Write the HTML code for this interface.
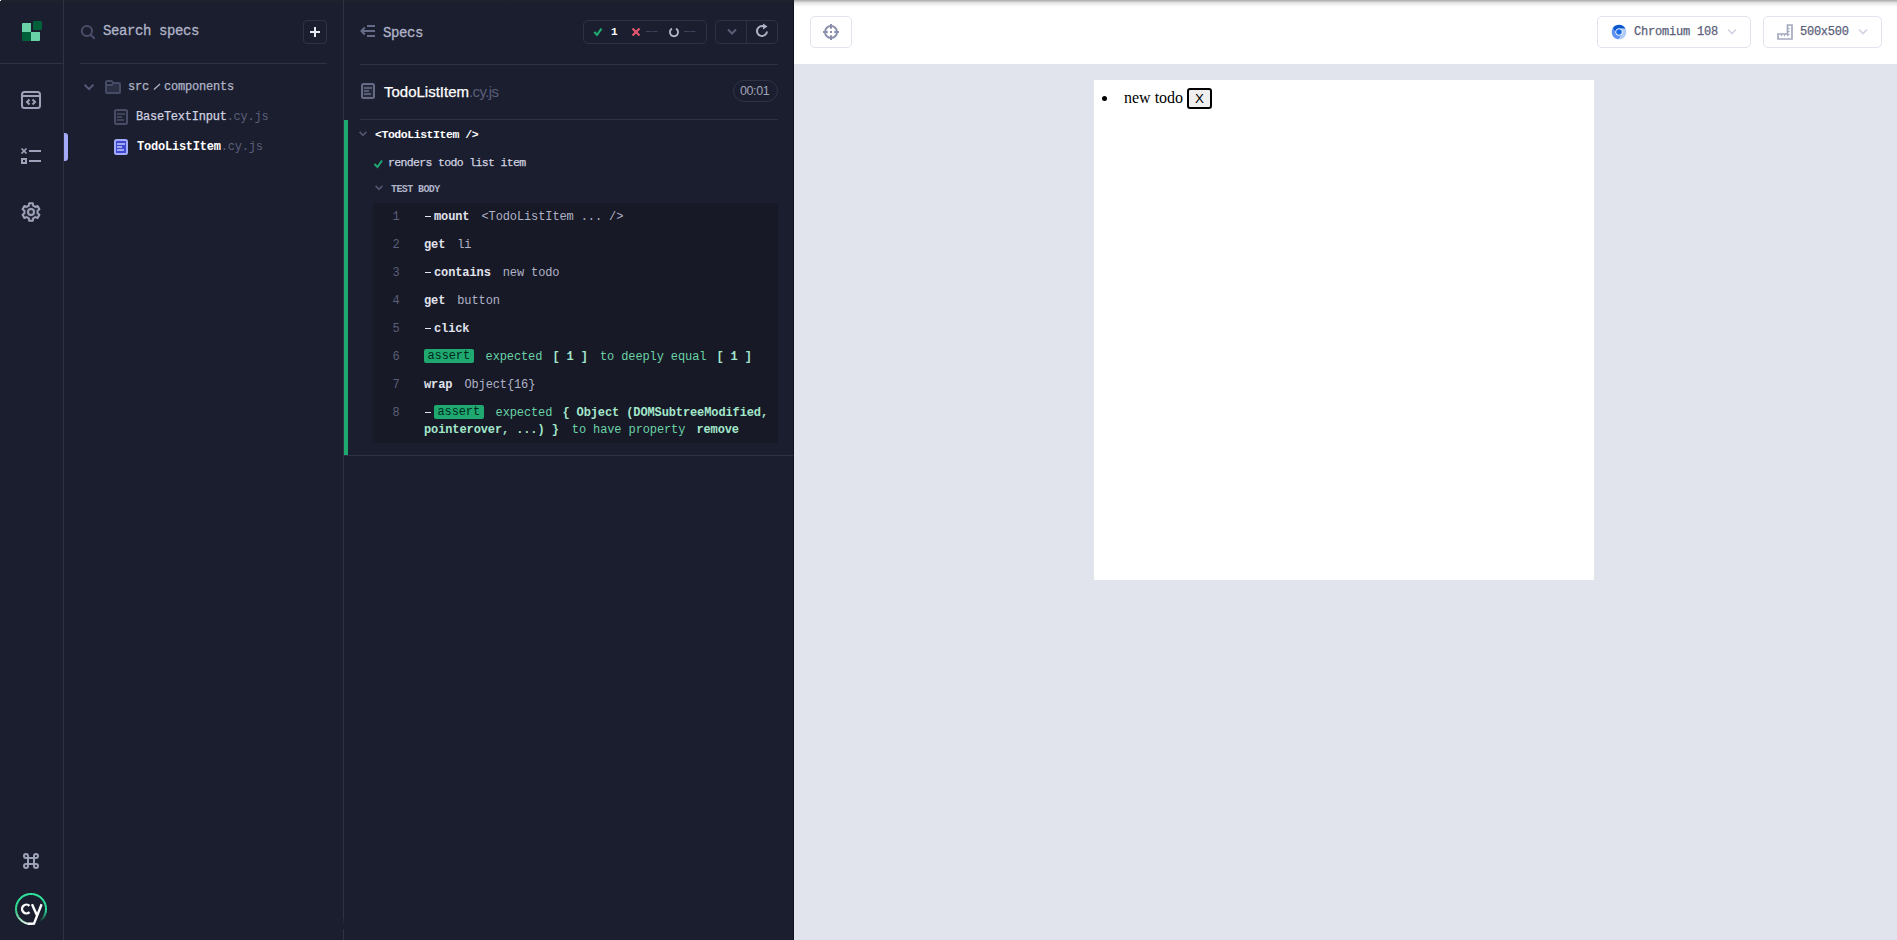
<!DOCTYPE html>
<html><head><meta charset="utf-8">
<style>
*{box-sizing:border-box;margin:0;padding:0}
html,body{width:1897px;height:940px;overflow:hidden;background:#1b1e2e}
body{position:relative;font-family:"Liberation Mono",monospace;color:#afb3c7}
.a{position:absolute}
.t{position:absolute;white-space:pre;line-height:1}
svg{position:absolute;overflow:visible}
.ico{fill:none;stroke:#9ea2b9;stroke-width:2}
</style></head><body>

<!-- ===== Left nav ===== -->
<div class="a" style="left:63px;top:0;width:1px;height:940px;background:#2e3247"></div>
<div class="a" style="left:0;top:63px;width:63px;height:1px;background:#2e3247"></div>

<!-- logo -->
<div class="a" style="left:22px;top:23px;width:9px;height:9px;background:#69d3a7;border-radius:1px 0 0 0"></div>
<div class="a" style="left:32.5px;top:21.3px;width:9px;height:9px;background:#006039;border-radius:1px"></div>
<div class="a" style="left:22px;top:32px;width:9px;height:9px;background:#006039;border-radius:0 0 0 1px"></div>
<div class="a" style="left:31px;top:32px;width:9px;height:9px;background:#69d3a7;border-radius:0 0 1px 0"></div>

<!-- code icon -->
<svg style="left:0;top:0" width="1" height="1"><g class="ico">
<rect x="22" y="92" width="18" height="16" rx="2.5"/>
<line x1="22" y1="96" x2="40" y2="96"/>
<polyline points="29.5,99.5 27,102 29.5,104.5"/>
<polyline points="32.5,99.5 35,102 32.5,104.5"/>
</g></svg>
<!-- list icon -->
<svg style="left:0;top:0" width="1" height="1"><g class="ico">
<line x1="21.5" y1="148.5" x2="26.5" y2="153.5" stroke-width="1.7"/><line x1="26.5" y1="148.5" x2="21.5" y2="153.5" stroke-width="1.7"/>
<rect x="22" y="159" width="4" height="4"/>
<line x1="29" y1="151" x2="41" y2="151"/>
<line x1="29" y1="161" x2="41" y2="161"/>
</g></svg>
<!-- gear -->
<svg style="left:30.7px;top:212px" width="1" height="1"><g class="ico">
<path d="M-2.18 -6.33 L-1.85 -8.71 L1.85 -8.71 L2.18 -6.33 L4.40 -5.06 L6.61 -5.96 L8.46 -2.75 L6.58 -1.28 L6.58 1.28 L8.46 2.75 L6.61 5.96 L4.40 5.06 L2.18 6.33 L1.85 8.71 L-1.85 8.71 L-2.18 6.33 L-4.40 5.06 L-6.61 5.96 L-8.46 2.75 L-6.58 1.28 L-6.58 -1.28 L-8.46 -2.75 L-6.61 -5.96 L-4.40 -5.06Z" stroke-linejoin="round" fill="#262939"/>
<circle cx="0" cy="0" r="3"/>
</g></svg>
<!-- cmd icon -->
<svg style="left:0;top:0" width="1" height="1"><g class="ico">
<path d="M28 858 H34 V864 H28 Z M28 858 V856 A2 2 0 1 0 26 858 H28 M34 858 V856 A2 2 0 1 1 36 858 H34 M28 864 V866 A2 2 0 1 1 26 864 H28 M34 864 V866 A2 2 0 1 0 36 864 H34"/>
</g></svg>
<!-- cypress logo -->
<svg style="left:0;top:0" width="1" height="1">
<defs>
<linearGradient id="cyg" x1="0" y1="0" x2="0" y2="1">
<stop offset="0" stop-color="#2ee59d"/><stop offset="0.6" stop-color="#2bc387"/><stop offset="1" stop-color="#b8f0d8"/>
</linearGradient>
<linearGradient id="cyg2" x1="0" y1="0" x2="1" y2="1">
<stop offset="0" stop-color="#2ee59d"/><stop offset="1" stop-color="#1b1e2e"/>
</linearGradient>
</defs>
<g fill="none" stroke-width="2"><path d="M30.87 894.00 A15 15 0 0 1 32.70 894.10" stroke="rgba(46,229,157,1.00)"/><path d="M32.44 894.07 A15 15 0 0 1 34.25 894.36" stroke="rgba(46,229,157,1.00)"/><path d="M33.99 894.30 A15 15 0 0 1 35.76 894.78" stroke="rgba(46,229,157,1.00)"/><path d="M35.51 894.69 A15 15 0 0 1 37.22 895.35" stroke="rgba(46,229,157,1.00)"/><path d="M36.98 895.24 A15 15 0 0 1 38.61 896.08" stroke="rgba(46,229,157,1.00)"/><path d="M38.39 895.94 A15 15 0 0 1 39.92 896.94" stroke="rgba(46,229,157,1.00)"/><path d="M39.71 896.79 A15 15 0 0 1 41.13 897.94" stroke="rgba(46,229,157,1.00)"/><path d="M40.94 897.77 A15 15 0 0 1 42.23 899.06" stroke="rgba(46,229,157,1.00)"/><path d="M42.06 898.87 A15 15 0 0 1 43.21 900.29" stroke="rgba(46,229,157,1.00)"/><path d="M43.06 900.08 A15 15 0 0 1 44.06 901.61" stroke="rgba(46,229,157,1.00)"/><path d="M43.92 901.39 A15 15 0 0 1 44.76 903.02" stroke="rgba(46,229,157,1.00)"/><path d="M44.65 902.78 A15 15 0 0 1 45.31 904.49" stroke="rgba(46,229,157,1.00)"/><path d="M45.22 904.24 A15 15 0 0 1 45.70 906.01" stroke="rgba(46,229,157,1.00)"/><path d="M45.64 905.75 A15 15 0 0 1 45.93 907.56" stroke="rgba(46,229,157,1.00)"/><path d="M45.90 907.30 A15 15 0 0 1 46.00 909.13" stroke="rgba(46,229,157,1.00)"/><path d="M46.00 908.87 A15 15 0 0 1 45.90 910.70" stroke="rgba(46,229,157,1.00)"/><path d="M45.93 910.44 A15 15 0 0 1 45.64 912.25" stroke="rgba(45,222,152,0.94)"/><path d="M45.70 911.99 A15 15 0 0 1 45.22 913.76" stroke="rgba(44,212,144,0.85)"/><path d="M45.31 913.51 A15 15 0 0 1 44.65 915.22" stroke="rgba(42,202,137,0.76)"/><path d="M44.76 914.98 A15 15 0 0 1 43.92 916.61" stroke="rgba(41,193,129,0.67)"/><path d="M44.06 916.39 A15 15 0 0 1 43.06 917.92" stroke="rgba(40,183,122,0.58)"/><path d="M43.21 917.71 A15 15 0 0 1 42.06 919.13" stroke="rgba(38,164,110,0.46)"/><path d="M42.23 918.94 A15 15 0 0 1 40.94 920.23" stroke="rgba(36,140,96,0.33)"/><path d="M41.13 920.06 A15 15 0 0 1 39.71 921.21" stroke="rgba(33,116,81,0.20)"/><path d="M39.92 921.06 A15 15 0 0 1 38.39 922.06" stroke="rgba(31,92,67,0.07)"/><path d="M34.25 923.64 A15 15 0 0 1 32.44 923.93" stroke="rgba(206,241,223,0.18)"/><path d="M32.70 923.90 A15 15 0 0 1 30.87 924.00" stroke="rgba(218,245,231,0.53)"/><path d="M31.13 924.00 A15 15 0 0 1 29.30 923.90" stroke="rgba(230,248,239,0.88)"/><path d="M29.56 923.93 A15 15 0 0 1 27.75 923.64" stroke="rgba(229,248,238,1.00)"/><path d="M28.01 923.70 A15 15 0 0 1 26.24 923.22" stroke="rgba(220,246,233,1.00)"/><path d="M26.49 923.31 A15 15 0 0 1 24.78 922.65" stroke="rgba(211,244,227,1.00)"/><path d="M25.02 922.76 A15 15 0 0 1 23.39 921.92" stroke="rgba(202,242,222,1.00)"/><path d="M23.61 922.06 A15 15 0 0 1 22.08 921.06" stroke="rgba(193,240,216,1.00)"/><path d="M22.29 921.21 A15 15 0 0 1 20.87 920.06" stroke="rgba(178,237,208,1.00)"/><path d="M21.06 920.23 A15 15 0 0 1 19.77 918.94" stroke="rgba(161,233,198,1.00)"/><path d="M19.94 919.13 A15 15 0 0 1 18.79 917.71" stroke="rgba(143,229,188,1.00)"/><path d="M18.94 917.92 A15 15 0 0 1 17.94 916.39" stroke="rgba(126,225,178,1.00)"/><path d="M18.08 916.61 A15 15 0 0 1 17.24 914.98" stroke="rgba(109,221,168,1.00)"/><path d="M17.35 915.22 A15 15 0 0 1 16.69 913.51" stroke="rgba(91,217,158,1.00)"/><path d="M16.78 913.76 A15 15 0 0 1 16.30 911.99" stroke="rgba(74,213,148,1.00)"/><path d="M16.36 912.25 A15 15 0 0 1 16.07 910.44" stroke="rgba(59,210,140,1.00)"/><path d="M16.10 910.70 A15 15 0 0 1 16.00 908.87" stroke="rgba(57,213,142,1.00)"/><path d="M16.00 909.13 A15 15 0 0 1 16.10 907.30" stroke="rgba(55,216,145,1.00)"/><path d="M16.07 907.56 A15 15 0 0 1 16.36 905.75" stroke="rgba(53,219,148,1.00)"/><path d="M16.30 906.01 A15 15 0 0 1 16.78 904.24" stroke="rgba(51,221,150,1.00)"/><path d="M16.69 904.49 A15 15 0 0 1 17.35 902.78" stroke="rgba(49,224,153,1.00)"/><path d="M17.24 903.02 A15 15 0 0 1 18.08 901.39" stroke="rgba(47,227,155,1.00)"/><path d="M17.94 901.61 A15 15 0 0 1 18.94 900.08" stroke="rgba(46,229,157,1.00)"/><path d="M18.79 900.29 A15 15 0 0 1 19.94 898.87" stroke="rgba(46,229,157,1.00)"/><path d="M19.77 899.06 A15 15 0 0 1 21.06 897.77" stroke="rgba(46,229,157,1.00)"/><path d="M20.87 897.94 A15 15 0 0 1 22.29 896.79" stroke="rgba(46,229,157,1.00)"/><path d="M22.08 896.94 A15 15 0 0 1 23.61 895.94" stroke="rgba(46,229,157,1.00)"/><path d="M23.39 896.08 A15 15 0 0 1 25.02 895.24" stroke="rgba(46,229,157,1.00)"/><path d="M24.78 895.35 A15 15 0 0 1 26.49 894.69" stroke="rgba(46,229,157,1.00)"/><path d="M26.24 894.78 A15 15 0 0 1 28.01 894.30" stroke="rgba(46,229,157,1.00)"/><path d="M27.75 894.36 A15 15 0 0 1 29.56 894.07" stroke="rgba(46,229,157,1.00)"/><path d="M29.30 894.10 A15 15 0 0 1 31.13 894.00" stroke="rgba(46,229,157,1.00)"/></g>
<path d="M29.5 905.8 A4.4 4.4 0 1 0 29.5 912.2" fill="none" stroke="#fff" stroke-width="2.4"/>
<path d="M32 904.2 L36.8 915 M41.6 904.2 L34 923.6 L28 923.8" fill="none" stroke="#fff" stroke-width="2.4"/>
</svg>

<!-- ===== Spec list panel ===== -->
<div class="a" style="left:343px;top:0;width:1px;height:940px;background:#2e3247"></div>
<svg style="left:0;top:0" width="1" height="1"><g fill="none" stroke="#4a4e69" stroke-width="2">
<circle cx="86.9" cy="31" r="5.1"/><line x1="90.6" y1="34.7" x2="94.2" y2="38.3" stroke-linecap="round"/>
</g></svg>
<div class="t" style="left:103px;top:24px;font-size:14px;letter-spacing:-0.4px;color:#afb3c7;-webkit-text-stroke:0.3px #afb3c7">Search specs</div>
<div class="a" style="left:303px;top:20px;width:24px;height:24px;border:1px solid #2e3247;border-radius:4px"></div>
<svg style="left:0;top:0" width="1" height="1"><g fill="none" stroke="#e6e8f2" stroke-width="2">
<line x1="310" y1="32" x2="320" y2="32"/><line x1="315" y1="27" x2="315" y2="37"/>
</g></svg>
<div class="a" style="left:80px;top:63px;width:247px;height:1px;background:#2e3247"></div>

<!-- tree -->
<svg style="left:0;top:0" width="1" height="1"><g fill="none" stroke="#545a77" stroke-width="2">
<polyline points="84.5,84.6 89,89.1 93.5,84.6"/>
</g>
<rect x="107" y="84" width="13" height="9" fill="#2c3044"/>
<path d="M106 92 V82.5 Q106 81 107.5 81 H111.5 L113.5 83 H118.5 Q120 83 120 84.5 V92 Q120 93 119 93 H107 Q106 93 106 92 Z M106 85 H112 L113.5 83" fill="none" stroke="#474b65" stroke-width="2" stroke-linejoin="round"/>
</svg>
<div class="t" style="left:128px;top:81px;font-size:12px;letter-spacing:-0.2px;color:#afb3c7;-webkit-text-stroke:0.25px #afb3c7">src</div><svg style="left:0;top:0" width="1" height="1"><line x1="154" y1="89.5" x2="160" y2="84" stroke="#afb3c7" stroke-width="1.3"/></svg><div class="t" style="left:164px;top:81px;font-size:12px;letter-spacing:-0.2px;color:#afb3c7;-webkit-text-stroke:0.25px #afb3c7">components</div>

<svg style="left:0;top:0" width="1" height="1">
<rect x="115" y="110" width="12" height="14" rx="1.5" fill="#1f2233" stroke="#484c66" stroke-width="2"/>
<g stroke="#484c66" stroke-width="1.6"><line x1="117" y1="114" x2="125" y2="114"/><line x1="117" y1="117" x2="122" y2="117"/><line x1="117" y1="120" x2="124" y2="120"/></g>
<rect x="115" y="140" width="12" height="14" rx="1.5" fill="#3f49d1" stroke="#a3abfa" stroke-width="2"/>
<g stroke="#bcc2fc" stroke-width="1.6"><line x1="117" y1="144" x2="125" y2="144"/><line x1="117" y1="147" x2="122" y2="147"/><line x1="117" y1="150" x2="124" y2="150"/></g>
</svg>
<div class="t" style="left:136px;top:111px;font-size:12px;letter-spacing:-0.23px;color:#d0d2e0;-webkit-text-stroke:0.25px #d0d2e0">BaseTextInput<span style="color:#5a5f7a;-webkit-text-stroke:0">.cy.js</span></div>
<div class="t" style="left:137px;top:141px;font-size:12px;letter-spacing:-0.22px;color:#fff;font-weight:bold">TodoListItem<span style="color:#5a5f7a;font-weight:normal">.cy.js</span></div>
<div class="a" style="left:64px;top:133px;width:4px;height:28px;background:#a3abf9;border-radius:0 3px 3px 0"></div>

<div class="a" style="left:343px;top:918px;width:1px;height:11px;background:linear-gradient(#262a3c,#1e2131 60%,#15172a)"></div>
<!-- ===== Reporter ===== -->
<svg style="left:0;top:0" width="1" height="1"><g fill="none" stroke="#666b88" stroke-width="2">
<line x1="367" y1="26" x2="375" y2="26"/><line x1="362" y1="31" x2="375" y2="31"/><line x1="367" y1="36" x2="375" y2="36"/>
<polyline points="364.8,27.5 361.5,31 364.8,34.5"/>
</g></svg>
<div class="t" style="left:383px;top:26px;font-size:14px;letter-spacing:-0.4px;color:#afb3c7;-webkit-text-stroke:0.3px #afb3c7">Specs</div>

<div class="a" style="left:583px;top:20px;width:124px;height:24px;border:1px solid #2e3247;border-radius:5px"></div>
<svg style="left:0;top:0" width="1" height="1">
<polyline points="594.3,32 597,34.8 601.5,28.6" fill="none" stroke="#1fa971" stroke-width="2.2"/>
<g stroke="#e45770" stroke-width="2.2"><line x1="632.5" y1="28.5" x2="639.5" y2="35.5"/><line x1="639.5" y1="28.5" x2="632.5" y2="35.5"/></g>
<g stroke="#3d4159" stroke-width="1"><line x1="646" y1="31.5" x2="651.4" y2="31.5"/><line x1="652.2" y1="31.5" x2="657.6" y2="31.5"/>
<line x1="684" y1="31.5" x2="689.4" y2="31.5"/><line x1="690.2" y1="31.5" x2="695.6" y2="31.5"/></g>
<path d="M676.05 28.65 A4.1 4.1 0 1 1 671.95 28.65" fill="none" stroke="#afb3c7" stroke-width="1.9"/>
</svg>
<div class="t" style="left:611px;top:27px;font-size:11px;color:#fff;font-weight:bold">1</div>

<div class="a" style="left:715px;top:20px;width:63px;height:24px;border:1px solid #2e3247;border-radius:5px"></div>
<div class="a" style="left:746px;top:20px;width:1px;height:24px;background:#2e3247"></div>
<svg style="left:0;top:0" width="1" height="1">
<polyline points="728,29.5 732,33.5 736,29.5" fill="none" stroke="#5a5f7a" stroke-width="2"/>
<path d="M767 31.5 A5 5 0 1 1 764.2 26.5" fill="none" stroke="#afb3c7" stroke-width="2"/>
<path d="M763 23.5 L767.5 26.5 L763 29.5 Z" fill="#afb3c7"/>
</svg>

<div class="a" style="left:360px;top:64px;width:418px;height:1px;background:#2e3247"></div>

<svg style="left:0;top:0" width="1" height="1">
<rect x="362" y="84" width="12" height="14" rx="1.5" fill="#262939" stroke="#666b88" stroke-width="2"/>
<g stroke="#666b88" stroke-width="1.6"><line x1="364" y1="88" x2="372" y2="88"/><line x1="364" y1="91" x2="369" y2="91"/><line x1="364" y1="94" x2="371" y2="94"/></g>
</svg>
<div class="t" style="left:384px;top:84px;font-family:'Liberation Sans',sans-serif;font-size:15px;color:#fff;-webkit-text-stroke:0.25px #fff">TodoListItem<span style="color:#5a5f7a;letter-spacing:-0.6px;-webkit-text-stroke:0">.cy.js</span></div>
<div class="a" style="left:733px;top:80px;width:45px;height:22px;border:1px solid #2e3247;border-radius:11px"></div>
<div class="t" style="left:740px;top:85px;font-family:'Liberation Sans',sans-serif;font-size:12.5px;letter-spacing:-0.4px;color:#a0a4b8">00:01</div>

<div class="a" style="left:360px;top:119px;width:418px;height:1px;background:#2e3247"></div>
<div class="a" style="left:344px;top:120px;width:4px;height:335px;background:#1fa971"></div>
<div class="a" style="left:344px;top:455px;width:449px;height:1px;background:#2e3247"></div>

<svg style="left:0;top:0" width="1" height="1">
<polyline points="359.6,131.9 363,135.3 366.4,131.9" fill="none" stroke="#4f5470" stroke-width="1.8"/>
<polyline points="374.5,164 377.5,167 382,160.5" fill="none" stroke="#1fa971" stroke-width="2"/>
<polyline points="375.6,185.9 379,189.3 382.4,185.9" fill="none" stroke="#4f5470" stroke-width="1.8"/>
</svg>
<div class="t" style="left:375px;top:129px;font-size:11.5px;letter-spacing:-0.45px;color:#fff;font-weight:bold">&lt;TodoListItem /&gt;</div>
<div class="t" style="left:388px;top:157px;font-size:11.5px;letter-spacing:-0.65px;color:#d0d2e0;-webkit-text-stroke:0.25px #d0d2e0">renders todo list item</div>
<div class="t" style="left:391px;top:185px;font-size:10px;letter-spacing:-0.6px;color:#afb3c7;font-weight:bold">TEST BODY</div>

<!-- commands -->
<div class="a" style="left:373px;top:203px;width:405px;height:240px;background:#171926"></div>
<div id="cmds" style="position:absolute;left:373px;top:203px;width:405px">
<style>
.cr{position:absolute;left:0;width:405px;height:28px;line-height:28px;font-size:12px;letter-spacing:-0.11px;white-space:pre}
.num{position:absolute;left:0;width:26.5px;text-align:right;color:#5a5f7a}
.cm{position:absolute;left:51px;top:0}
.nm{font-weight:bold;color:#e1e3ed}
.msg{color:#afb3c7;margin-left:12px}
.ds{display:inline-block;width:6px;height:1px;background:#e1e3ed;vertical-align:top;margin:13px 3px 0 1px}
.bd{display:inline-block;background:#1fa971;color:#00291b;font-weight:normal;height:14px;line-height:14px;padding:0 3.5px;border-radius:2px;vertical-align:top;margin-top:6px}
.ex{color:#69d3a7;margin-left:12px}
.st{color:#a3e7cb;font-weight:bold;margin:0 5px 0 3px}
</style>
<div class="cr" style="top:0"><span class="num">1</span><div class="cm"><span class="ds"></span><span class="nm">mount</span><span class="msg">&lt;TodoListItem ... /&gt;</span></div></div>
<div class="cr" style="top:28px"><span class="num">2</span><div class="cm"><span class="nm">get</span><span class="msg">li</span></div></div>
<div class="cr" style="top:56px"><span class="num">3</span><div class="cm"><span class="ds"></span><span class="nm">contains</span><span class="msg">new todo</span></div></div>
<div class="cr" style="top:84px"><span class="num">4</span><div class="cm"><span class="nm">get</span><span class="msg">button</span></div></div>
<div class="cr" style="top:112px"><span class="num">5</span><div class="cm"><span class="ds"></span><span class="nm">click</span></div></div>
<div class="cr" style="top:140px"><span class="num">6</span><div class="cm"><span class="bd">assert</span><span class="ex">expected <span class="st">[ 1 ]</span> to deeply equal <span class="st">[ 1 ]</span></span></div></div>
<div class="cr" style="top:168px"><span class="num">7</span><div class="cm"><span class="nm">wrap</span><span class="msg">Object{16}</span></div></div>
<div class="cr" style="top:196px"><span class="num">8</span><div class="cm"><span class="ds"></span><span class="bd">assert</span><span class="ex">expected <span class="st">{ Object (DOMSubtreeModified,</span></span></div></div>
<div class="cr" style="top:213.4px"><div class="cm"><span class="st" style="margin:0">pointerover, ...) }</span><span class="ex" style="margin-left:6px"> to have property <span class="st" style="margin-left:4px">remove</span></span></div></div>
</div>

<!-- ===== AUT ===== -->
<div class="a" style="left:793px;top:0;width:1px;height:940px;background:#0f1120"></div>
<div class="a" style="left:794px;top:0;width:1103px;height:64px;background:#fff"></div>
<div class="a" style="left:794px;top:64px;width:1103px;height:876px;background:#e1e3ed"></div>

<div class="a" style="left:810px;top:16px;width:42px;height:32px;border:1px solid #e1e3ed;border-radius:5px"></div>
<svg style="left:0;top:0" width="1" height="1"><circle cx="831" cy="32" r="6" fill="none" stroke="#8a8fab" stroke-width="1.9"/>
<g stroke="#8a8fab" stroke-width="2"><line x1="831" y1="24" x2="831" y2="28.8"/><line x1="831" y1="35.2" x2="831" y2="40"/><line x1="823" y1="32" x2="827.8" y2="32"/><line x1="834.2" y1="32" x2="839" y2="32"/></g>
<rect x="830" y="31" width="2" height="2" fill="#8a8fab"/></svg>

<div class="a" style="left:1597px;top:16px;width:154px;height:32px;border:1px solid #e1e3ed;border-radius:5px"></div>
<svg style="left:0;top:0" width="1" height="1">
<path d="M1621.94 33.70 L1618.71 39.29 A7.3 7.3 0 0 0 1625.46 28.60 L1619.00 28.60 A3.4 3.4 0 0 1 1621.94 33.70Z" fill="#aecbfa"/>
<path d="M1616.06 33.70 L1612.83 28.11 A7.3 7.3 0 0 0 1618.71 39.29 L1621.94 33.70 A3.4 3.4 0 0 1 1616.06 33.70Z" fill="#5e92f2"/>
<path d="M1619.00 28.60 L1625.46 28.60 A7.3 7.3 0 0 0 1612.83 28.11 L1616.06 33.70 A3.4 3.4 0 0 1 1619.00 28.60Z" fill="#0b57d0"/>
<circle cx="1619" cy="32" r="3.6" fill="#fff"/>
<circle cx="1619" cy="32" r="2.8" fill="#1a6be5"/>
<polyline points="1728,29.5 1732,33.5 1736,29.5" fill="none" stroke="#d0d2e0" stroke-width="1.6"/>
</svg>
<div class="t" style="left:1634px;top:26px;font-size:12px;letter-spacing:-0.2px;color:#5a5f7a;-webkit-text-stroke:0.25px #5a5f7a">Chromium 108</div>

<div class="a" style="left:1763px;top:16px;width:119px;height:32px;border:1px solid #e1e3ed;border-radius:5px"></div>
<svg style="left:0;top:0" width="1" height="1">
<path d="M1778 34 H1787.5 V25 H1792 V39 H1778 Z" fill="none" stroke="#a5a9c0" stroke-width="1.7"/>
<g stroke="#a5a9c0" stroke-width="1.2"><line x1="1781.5" y1="34" x2="1781.5" y2="36.2"/><line x1="1784.5" y1="34" x2="1784.5" y2="36.2"/><line x1="1787.5" y1="34" x2="1787.5" y2="36.2"/><line x1="1787.5" y1="28.5" x2="1789.6" y2="28.5"/><line x1="1787.5" y1="31.5" x2="1789.6" y2="31.5"/><line x1="1787.5" y1="34.5" x2="1789.6" y2="34.5"/></g>
<polyline points="1859,29.5 1863,33.5 1867,29.5" fill="none" stroke="#d0d2e0" stroke-width="1.6"/>
</svg>
<div class="t" style="left:1800px;top:26px;font-size:12px;letter-spacing:-0.25px;color:#5a5f7a;-webkit-text-stroke:0.25px #5a5f7a">500x500</div>

<!-- AUT frame -->
<div class="a" style="left:1094px;top:80px;width:500px;height:500px;background:#fff"></div>
<div class="a" style="left:1102px;top:96px;width:5px;height:5px;border-radius:50%;background:#000"></div>
<div class="t" style="left:1124px;font-family:'Liberation Serif',serif;font-size:16px;line-height:18px;top:89px;color:#000">new todo</div>
<div class="a" style="left:1187px;top:88px;width:25px;height:21px;border:2px solid #000;border-radius:3px;background:#efefef"></div>
<div class="t" style="left:1195px;top:91px;font-family:'Liberation Sans',sans-serif;font-size:13.33px;line-height:15px;color:#000">X</div>

<!-- top shadow -->
<div class="a" style="left:0;top:0;width:1px;height:1px;background:#fff;z-index:2"></div>
<div class="a" style="left:0;top:0;width:1897px;height:7px;background:linear-gradient(rgba(40,40,40,0.4),rgba(40,40,40,0.12) 40%,rgba(40,40,40,0))"></div>
</body></html>
